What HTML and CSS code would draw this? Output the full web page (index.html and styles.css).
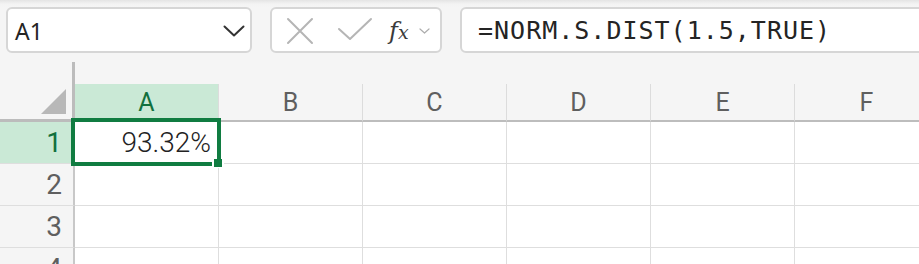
FILE: index.html
```html
<!DOCTYPE html>
<html>
<head>
<meta charset="utf-8">
<link rel="stylesheet" href="styles.css">
</head>
<body>
<div class="app">
  <div class="toolbar">
    <div class="namebox">
      <span class="ref">A1</span>
      <svg class="chev" width="22" height="12" viewBox="0 0 22 12"><polyline points="1.5,1.5 11,10.5 20.5,1.5" fill="none" stroke="#333" stroke-width="2" stroke-linecap="round" stroke-linejoin="round"/></svg>
    </div>
    <div class="fxbox">
      <svg class="ico-x" width="28" height="28" viewBox="0 0 28 28"><path d="M2 2 L26 26 M26 2 L2 26" stroke="#b5b5b5" stroke-width="2" stroke-linecap="round" fill="none"/></svg>
      <svg class="ico-check" width="36" height="26" viewBox="0 0 36 26"><polyline points="2,12 13,22 34,2" fill="none" stroke="#b5b5b5" stroke-width="2" stroke-linecap="round" stroke-linejoin="round"/></svg>
      <span class="fx">f<span class="fx-x">x</span></span>
      <svg class="ico-small" width="11" height="6" viewBox="0 0 11 6"><polyline points="1,1 5.5,5 10,1" fill="none" stroke="#adadad" stroke-width="1.2" stroke-linecap="round" stroke-linejoin="round"/></svg>
    </div>
    <div class="formula">=NORM.S.DIST(1.5,TRUE)</div>
  </div>
  <div class="sheet">
    <div class="hrow">
      <div class="corner"><svg class="tri" width="26" height="26" viewBox="0 0 26 26"><polygon points="0,25 25,25 25,0" fill="#b8b8b8"/></svg></div>
      <div class="colhdr sel">A</div>
      <div class="colhdr">B</div>
      <div class="colhdr">C</div>
      <div class="colhdr">D</div>
      <div class="colhdr">E</div>
      <div class="colhdr">F</div>
    </div>
    <div class="row">
      <div class="rowhdr sel">1</div>
      <div class="cell num">93.32%</div>
      <div class="cell"></div><div class="cell"></div><div class="cell"></div><div class="cell"></div><div class="cell"></div>
    </div>
    <div class="row">
      <div class="rowhdr">2</div>
      <div class="cell"></div><div class="cell"></div><div class="cell"></div><div class="cell"></div><div class="cell"></div><div class="cell"></div>
    </div>
    <div class="row">
      <div class="rowhdr">3</div>
      <div class="cell"></div><div class="cell"></div><div class="cell"></div><div class="cell"></div><div class="cell"></div><div class="cell"></div>
    </div>
    <div class="row">
      <div class="rowhdr">4</div>
      <div class="cell"></div><div class="cell"></div><div class="cell"></div><div class="cell"></div><div class="cell"></div><div class="cell"></div>
    </div>
    <div class="selection"></div>
    <div class="handle"></div>
  </div>
</div>
</body>
</html>
```

FILE: styles.css
```css
* { box-sizing: border-box; }
html, body {
  margin: 0;
  padding: 0;
  width: 919px;
  height: 264px;
  overflow: hidden;
  background: #f5f5f5;
}
.app {
  width: 919px;
  height: 264px;
  overflow: hidden;
}
.toolbar {
  height: 62px;
  display: flex;
  align-items: flex-start;
  gap: 18px;
  padding: 7px 0 0 6px;
  background: linear-gradient(#e4e4e4 0px, #f3f3f3 4px, #f5f5f5 8px);
}
.namebox {
  width: 246px;
  height: 46px;
  flex: none;
  background: #fff;
  border: 2px solid #d6d6d6;
  border-radius: 6px;
  display: flex;
  align-items: center;
  justify-content: space-between;
  padding: 3px 5px 0 7px;
}
.ref {
  font-family: "Noto Sans", "Open Sans", sans-serif;
  font-size: 23px;
  color: #242424;
  line-height: 1;
}
.chev { margin-top: -2px; }
.fxbox {
  width: 172px;
  height: 46px;
  flex: none;
  background: #fff;
  border: 2px solid #d6d6d6;
  border-radius: 6px;
  display: flex;
  align-items: center;
  padding: 0 0 0 14px;
}
.ico-x { margin-top: 1px; }
.ico-check { margin-left: 23px; }
.fx {
  font-family: "DejaVu Serif", "Liberation Serif", serif;
  font-style: italic;
  font-size: 24px;
  color: #3a3a3a;
  margin-left: 16px;
  line-height: 1;
  margin-top: 2px;
}
.fx-x { font-size: 19px; }
.ico-small { margin-left: 10px; margin-top: 1px; }
.formula {
  flex: 1;
  margin-right: -20px;
  height: 46px;
  background: #fff;
  border: 2px solid #d6d6d6;
  border-radius: 6px;
  display: flex;
  align-items: center;
  padding: 0 0 0 16px;
  font-family: "DejaVu Sans Mono", monospace;
  font-size: 25px;
  letter-spacing: 1px;
  color: #242424;
  white-space: nowrap;
}
.sheet {
  position: relative;
  background: #fff;
}
.hrow {
  height: 60px;
  display: flex;
  align-items: flex-end;
  background: #f5f5f5;
}
.corner {
  width: 75px;
  height: 60px;
  flex: none;
  border-right: 3px solid #bcbcbc;
  border-bottom: 3px solid #bcbcbc;
  display: flex;
  align-items: flex-end;
  justify-content: flex-end;
  padding: 0 5px 4px 0;
}
.colhdr {
  width: 144px;
  height: 38px;
  flex: none;
  border-right: 1px solid #dcdcdc;
  border-bottom: 2px solid #bdbdbd;
  font-family: Roboto, "Noto Sans", sans-serif;
  font-size: 25px;
  color: #5f5f5f;
  display: flex;
  align-items: center;
  justify-content: center;
  line-height: 1;
}
.colhdr.sel {
  background: #cae9d6;
  color: #11703d;
}
.row {
  height: 42px;
  display: flex;
}
.rowhdr {
  width: 75px;
  height: 42px;
  flex: none;
  background: #f5f5f5;
  border-right: 2px solid #c8c8c8;
  border-bottom: 1px solid #dedede;
  font-family: Roboto, "Noto Sans", sans-serif;
  font-size: 28px;
  color: #5f5f5f;
  display: flex;
  align-items: center;
  justify-content: flex-end;
  padding: 0 11px 0 0;
  line-height: 1;
}
.rowhdr.sel {
  background: #cae9d6;
  color: #11703d;
}
.cell {
  width: 144px;
  height: 42px;
  flex: none;
  border-right: 1px solid #dedede;
  border-bottom: 1px solid #dedede;
}
.cell.num {
  font-family: Roboto, "Noto Sans", sans-serif;
  font-weight: 300;
  font-size: 28px;
  color: #222;
  display: flex;
  align-items: center;
  justify-content: flex-end;
  padding: 1px 7px 0 0;
  line-height: 1;
}
.selection {
  position: absolute;
  left: 71px;
  top: 56px;
  width: 150px;
  height: 48px;
  border: 4px solid #107c41;
}
.handle {
  position: absolute;
  left: 212px;
  top: 97px;
  width: 12px;
  height: 9px;
  background: #107c41;
  border-left: 2px solid #fff;
  border-right: 2px solid #fff;
  border-bottom: 1px solid #fff;
}
```
